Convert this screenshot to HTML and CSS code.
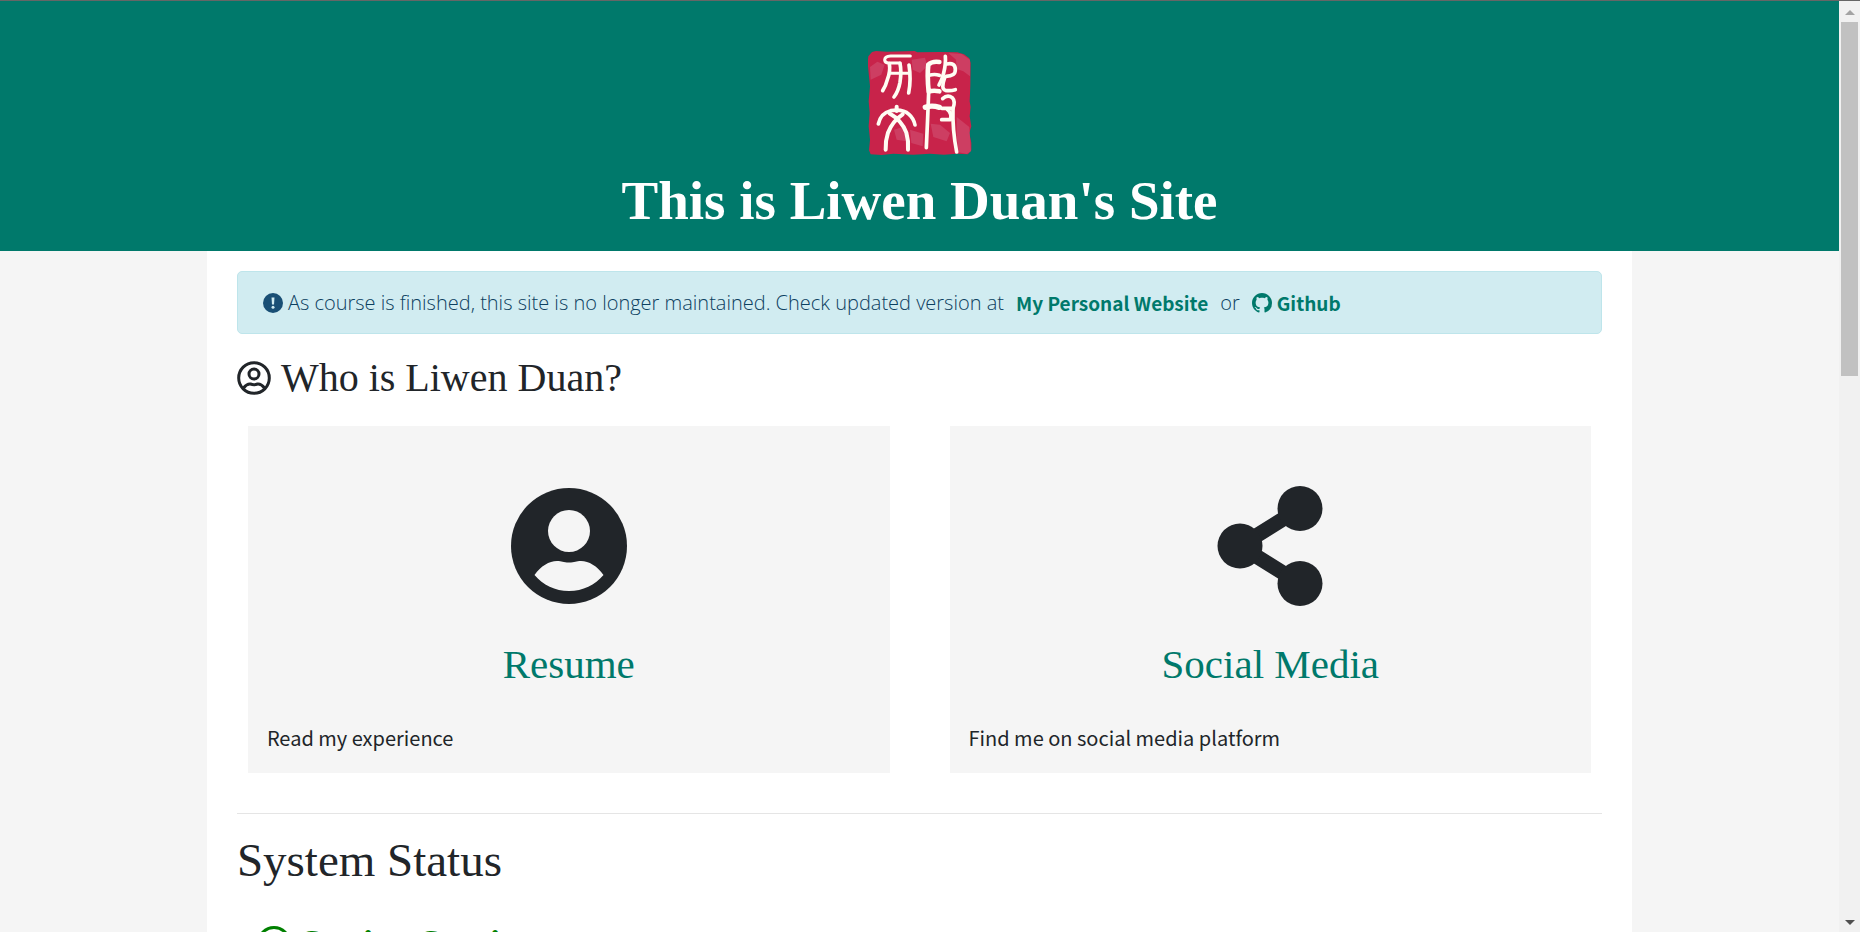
FILE: index.html
```
<!DOCTYPE html>
<html lang="en">

<head>
    <meta charset="UTF-8">
    <meta name="viewport" content="width=device-width, initial-scale=1.0">
    <title>Liwen Duan's Site</title>
    <link rel="stylesheet" href="styles.css">
</head>

<body>
    <div class="page">
        <header class="header">
            <svg class="seal" viewBox="84 64 312 312" role="img" aria-label="Seal">
                <path fill="#c8234a" d="M96 67 L108 64 L140 66 L224 64 L232 68 L300 67 L352 68 L372 74 L388 86 L392 100 L391 170 L389 215 L392 232 L389 260 L394 290 L388 310 L394 340 L394 362 L384 374 L350 372 L312 375 L270 372 L220 375 L160 372 L125 376 L92 374 L87 362 L90 330 L86 290 L89 250 L86 215 L90 170 L86 130 L83 100 L85 80 Z"/>
                <g fill="#d04a6d" opacity=".7">
                    <path d="M325 70 L365 73 L390 90 L390 140 L370 125 L350 118 L348 90 Z"/>
                    <path d="M350 262 L388 292 L393 365 L380 373 L356 368 L350 320 Z"/>
                    <path d="M90 112 L112 96 L134 105 L124 135 L92 150 Z"/>
                    <path d="M215 90 L255 84 L262 110 L240 130 L218 120 Z"/>
                    <path d="M162 300 L195 290 L198 335 L170 330 Z"/>
                    <path d="M210 300 L250 312 L248 350 L214 340 Z"/>
                    <path d="M272 282 L300 285 L330 310 L320 335 L280 322 Z"/>
                </g>
                <g fill="none" stroke="#fffdf3" stroke-width="11" stroke-linecap="round" stroke-linejoin="round">
                    <path stroke-width="9" d="M211 79 H152 Q134 80 134 91 Q135 100 146 100 H180"/>
                    <path d="M148 102 Q152 125 142 150 Q137 170 128 183"/>
                    <path d="M180 101 Q185 125 180 158 Q175 185 162 202"/>
                    <path stroke-width="9" d="M150 131 H206"/>
                    <path d="M207 106 Q214 150 206 190"/>
                    <path stroke-width="12" d="M170 231 V244"/>
                    <path d="M115 283 Q122 250 152 243 Q188 237 207 254 Q221 266 225 286"/>
                    <path stroke-width="12" d="M148 251 Q185 272 199 309 Q206 333 204 360"/>
                    <path stroke-width="12" d="M188 254 Q157 275 144 309 Q136 333 137 360"/>
                    <path stroke-width="14" d="M298 97 Q276 94 265 105 Q261 135 266 186 Q280 181 298 185"/>
                    <path d="M267 137 Q284 132 298 137"/>
                    <path d="M316 80 Q318 102 311 130 Q306 152 297 166"/>
                    <path d="M320 103 Q345 97 346 119 Q347 140 318 140"/>
                    <path d="M314 144 Q302 178 316 182 Q330 185 346 180"/>
                    <path d="M266 188 Q263 270 259 354"/>
                    <path stroke-width="16" d="M256 233 Q275 226 298 233"/>
                    <path d="M308 207 Q322 194 337 204 Q347 215 339 236 H305"/>
                    <path d="M322 239 Q337 252 331 270 H305"/>
                    <path d="M339 237 Q337 300 350 367"/>
                </g>
            </svg>
            <h1>This is Liwen Duan's Site</h1>
        </header>

        <main class="content">
            <div class="notice">
                <svg class="icon-sm" viewBox="0 0 20 20">
                    <circle cx="10" cy="10" r="10" fill="#194f75"/>
                    <path d="M8.5 4.5 H11.5 L11 11.5 H9 Z" fill="#d1ecf1"/>
                    <circle cx="10" cy="14.3" r="1.5" fill="#d1ecf1"/>
                </svg>
                <span class="notice-text">As course is finished, this site is no longer maintained. Check updated version at</span>
                <a href="#">My Personal Website</a>
                <span class="notice-text">or</span>
                <a href="#" class="github">
                    <svg class="icon-sm" viewBox="0 0 16 16" fill="#00796b"><path d="M8 0C3.58 0 0 3.58 0 8c0 3.54 2.29 6.53 5.47 7.59.4.07.55-.17.55-.38 0-.19-.01-.82-.01-1.49-2.01.37-2.53-.49-2.69-.94-.09-.23-.48-.94-.82-1.13-.28-.15-.68-.52-.01-.53.63-.01 1.08.58 1.23.82.72 1.21 1.87.87 2.33.66.07-.52.28-.87.51-1.07-1.78-.2-3.64-.89-3.64-3.95 0-.87.31-1.59.82-2.15-.08-.2-.36-1.02.08-2.12 0 0 .67-.21 2.2.82.64-.18 1.32-.27 2-.27s1.36.09 2 .27c1.53-1.04 2.2-.82 2.2-.82.44 1.1.16 1.92.08 2.12.51.56.82 1.27.82 2.15 0 3.07-1.87 3.75-3.65 3.95.29.25.54.73.54 1.48 0 1.07-.01 1.93-.01 2.2 0 .21.15.46.55.38A8.01 8.01 0 0 0 16 8c0-4.42-3.58-8-8-8z"/></svg>
                    Github
                </a>
            </div>

            <h2>
                <svg class="icon-md" viewBox="0 0 34 34" fill="none" stroke="#212529" stroke-width="3">
                    <circle cx="17" cy="17" r="15.3"/>
                    <circle cx="17" cy="13" r="5"/>
                    <path d="M6.5 27 Q10 22.5 13.5 23 Q17 24.3 20.5 23 Q24 22.5 27.5 27"/>
                </svg>
                Who is Liwen Duan?
            </h2>

            <div class="cards">
                <section class="card">
                    <svg class="icon-lg" viewBox="0 0 120 120">
                        <circle cx="60" cy="60" r="58" fill="#212529"/>
                        <circle cx="60" cy="45" r="21" fill="#f5f5f5"/>
                        <path fill="#f5f5f5" d="M25.5 89 C32 80 40 75 48 75 C53 75 54 76.5 60 76.5 C66 76.5 67 75 72 75 C80 75 88 80 94.5 89 C86 99 74 105 60 105 C46 105 34 99 25.5 89 Z"/>
                    </svg>
                    <h3><a href="#">Resume</a></h3>
                    <p>Read my experience</p>
                </section>
                <section class="card">
                    <svg class="icon-lg" viewBox="0 0 120 120" fill="#212529">
                        <path d="M90 22.5 L30 60 L90 97.5" fill="none" stroke="#212529" stroke-width="15"/>
                        <circle cx="90" cy="22.5" r="22.5"/>
                        <circle cx="30" cy="60" r="22.5"/>
                        <circle cx="90" cy="97.5" r="22.5"/>
                    </svg>
                    <h3><a href="#">Social Media</a></h3>
                    <p>Find me on social media platform</p>
                </section>
            </div>

            <hr>

            <h2 class="status-title">System Status</h2>
            <h3 class="status">
                <svg class="icon-md" viewBox="0 0 34 34" fill="none" stroke="#008000" stroke-width="3">
                    <circle cx="17" cy="17" r="15.5"/>
                    <path d="M10 17 L15 22 L24 12"/>
                </svg>
                Station Service
            </h3>
        </main>
    </div>

    <!-- scroll track -->
    <div class="scrollbar">
        <span class="arrow-up"></span>
        <div class="thumb"></div>
        <span class="arrow-down"></span>
    </div>
</body>

</html>
```

FILE: styles.css
```
* {
    box-sizing: border-box;
}

body {
    margin: 0;
    height: 100vh;
    display: flex;
    overflow: hidden;
    border-top: 1px solid #666;
    color: #212529;
    background-color: #f5f5f5;
    font-family: "Noto Sans CJK SC", "Open Sans", sans-serif;
    font-size: 20px;
    line-height: 31px;
}

a {
    color: #00796b;
    text-decoration: none;
}

h1,
h2,
h3 {
    margin: 0;
    font-family: "Liberation Serif", serif;
    font-weight: 400;
}

svg {
    flex: none;
    display: block;
}

.page {
    flex: 1;
    overflow: hidden;
}

.header {
    display: flex;
    flex-direction: column;
    align-items: center;
    padding: 50px 0 18px;
    background-color: #00796b;
}

.seal {
    width: 104px;
    height: 104px;
}

h1 {
    margin-top: 14px;
    color: white;
    font-size: 55px;
    font-weight: 700;
    line-height: 64px;
}

.content {
    width: 77.5%;
    margin: 0 auto;
    padding: 20px 30px;
    background-color: white;
}

.notice {
    display: flex;
    align-items: center;
    padding: 15px 25px;
    border: 1px solid #bee5eb;
    border-radius: 5px;
    background-color: #d1ecf1;
}

.notice a {
    margin: 0 12px;
    font-size: 19px;
    font-weight: 700;
}

.notice-text {
    color: #0c4060;
    font-family: "Open Sans", sans-serif;
    font-weight: 300;
}

.icon-sm {
    width: 20px;
    height: 20px;
    margin-right: 5px;
}

.notice .github {
    display: flex;
    align-items: center;
}

h2 {
    display: flex;
    align-items: center;
    margin: 16px 0 20px;
    font-size: 40px;
    line-height: 56px;
}

.icon-md {
    width: 34px;
    height: 34px;
    margin-right: 10px;
}

.cards {
    display: grid;
    grid-template-columns: 1fr 1fr;
    gap: 60px;
    padding: 0 11px;
}

.card {
    padding: 60px 19px 20px;
    background-color: #f5f5f5;
}

.icon-lg {
    width: 120px;
    height: 120px;
    margin: 0 auto;
}

h3 {
    font-size: 41px;
    line-height: 56px;
}

.card h3 {
    margin: 30px 0;
    text-align: center;
}

.card p {
    margin: 0;
}

hr {
    margin: 40px 0 18px;
    border: none;
    border-top: 1px solid #e5e5e5;
}

.status-title {
    margin: 0 0 27px;
    font-size: 47px;
}

.status {
    display: flex;
    align-items: center;
    padding: 0 20px;
    color: #008000;
    font-size: 36px;
    font-weight: 700;
}

.scrollbar {
    display: flex;
    flex-direction: column;
    align-items: center;
    width: 21px;
    background-color: #f1f1f1;
}

.thumb {
    width: 17px;
    height: 38%;
    margin: 7px 0 auto;
    background-color: #c1c1c1;
}

.arrow-up,
.arrow-down {
    border: 5px solid transparent;
}

.arrow-up {
    margin-top: 9px;
    border-top-width: 0;
    border-bottom-color: #a3a3a3;
}

.arrow-down {
    margin-bottom: 7px;
    border-top-color: #505050;
    border-bottom-width: 0;
}
```
